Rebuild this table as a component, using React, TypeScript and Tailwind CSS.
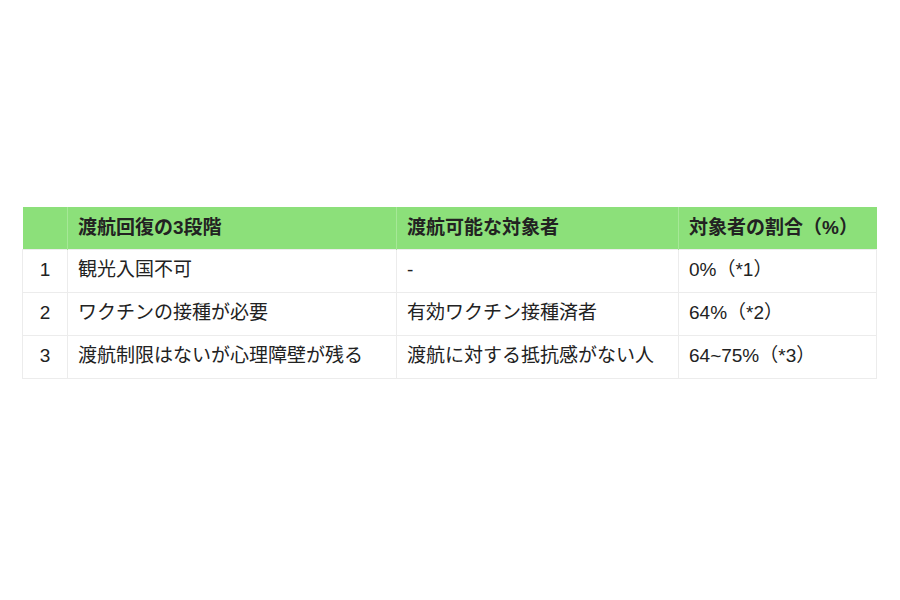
const rows = [
  ["1", "観光入国不可", "-", "0%（*1）"],
  ["2", "ワクチンの接種が必要", "有効ワクチン接種済者", "64%（*2）"],
  ["3", "渡航制限はないが心理障壁が残る", "渡航に対する抵抗感がない人", "64~75%（*3）"],
]

export default function App() {
  return (
    <div
      className="h-[600px] w-[900px] bg-white pl-[22px] pt-[207px] text-[#222]"
      style={{ fontFamily: '"Liberation Sans", "Noto Sans CJK JP", sans-serif' }}
    >
      <table className="w-[854px] table-fixed border-collapse text-[19px]">
        <colgroup>
          <col className="w-[45px]" />
          <col className="w-[329px]" />
          <col className="w-[282px]" />
          <col className="w-[198px]" />
        </colgroup>
        <thead>
          <tr className="h-[42px] bg-[#8ce07a] font-bold">
            <th className="border-r border-[#a6e897]"></th>
            <th className="border-r border-[#a6e897] px-[10px] text-left">渡航回復の3段階</th>
            <th className="border-r border-[#a6e897] px-[10px] text-left">渡航可能な対象者</th>
            <th className="px-[10px] text-left">対象者の割合（%）</th>
          </tr>
        </thead>
        <tbody>
          {rows.map((r) => (
            <tr key={r[0]} className="h-[43px] border border-[#ececec]">
              <td className="border border-[#ececec] text-center">{r[0]}</td>
              <td className="border border-[#ececec] px-[10px]">{r[1]}</td>
              <td className="border border-[#ececec] px-[10px]">{r[2]}</td>
              <td className="border border-[#ececec] px-[10px]">{r[3]}</td>
            </tr>
          ))}
        </tbody>
      </table>
    </div>
  )
}
